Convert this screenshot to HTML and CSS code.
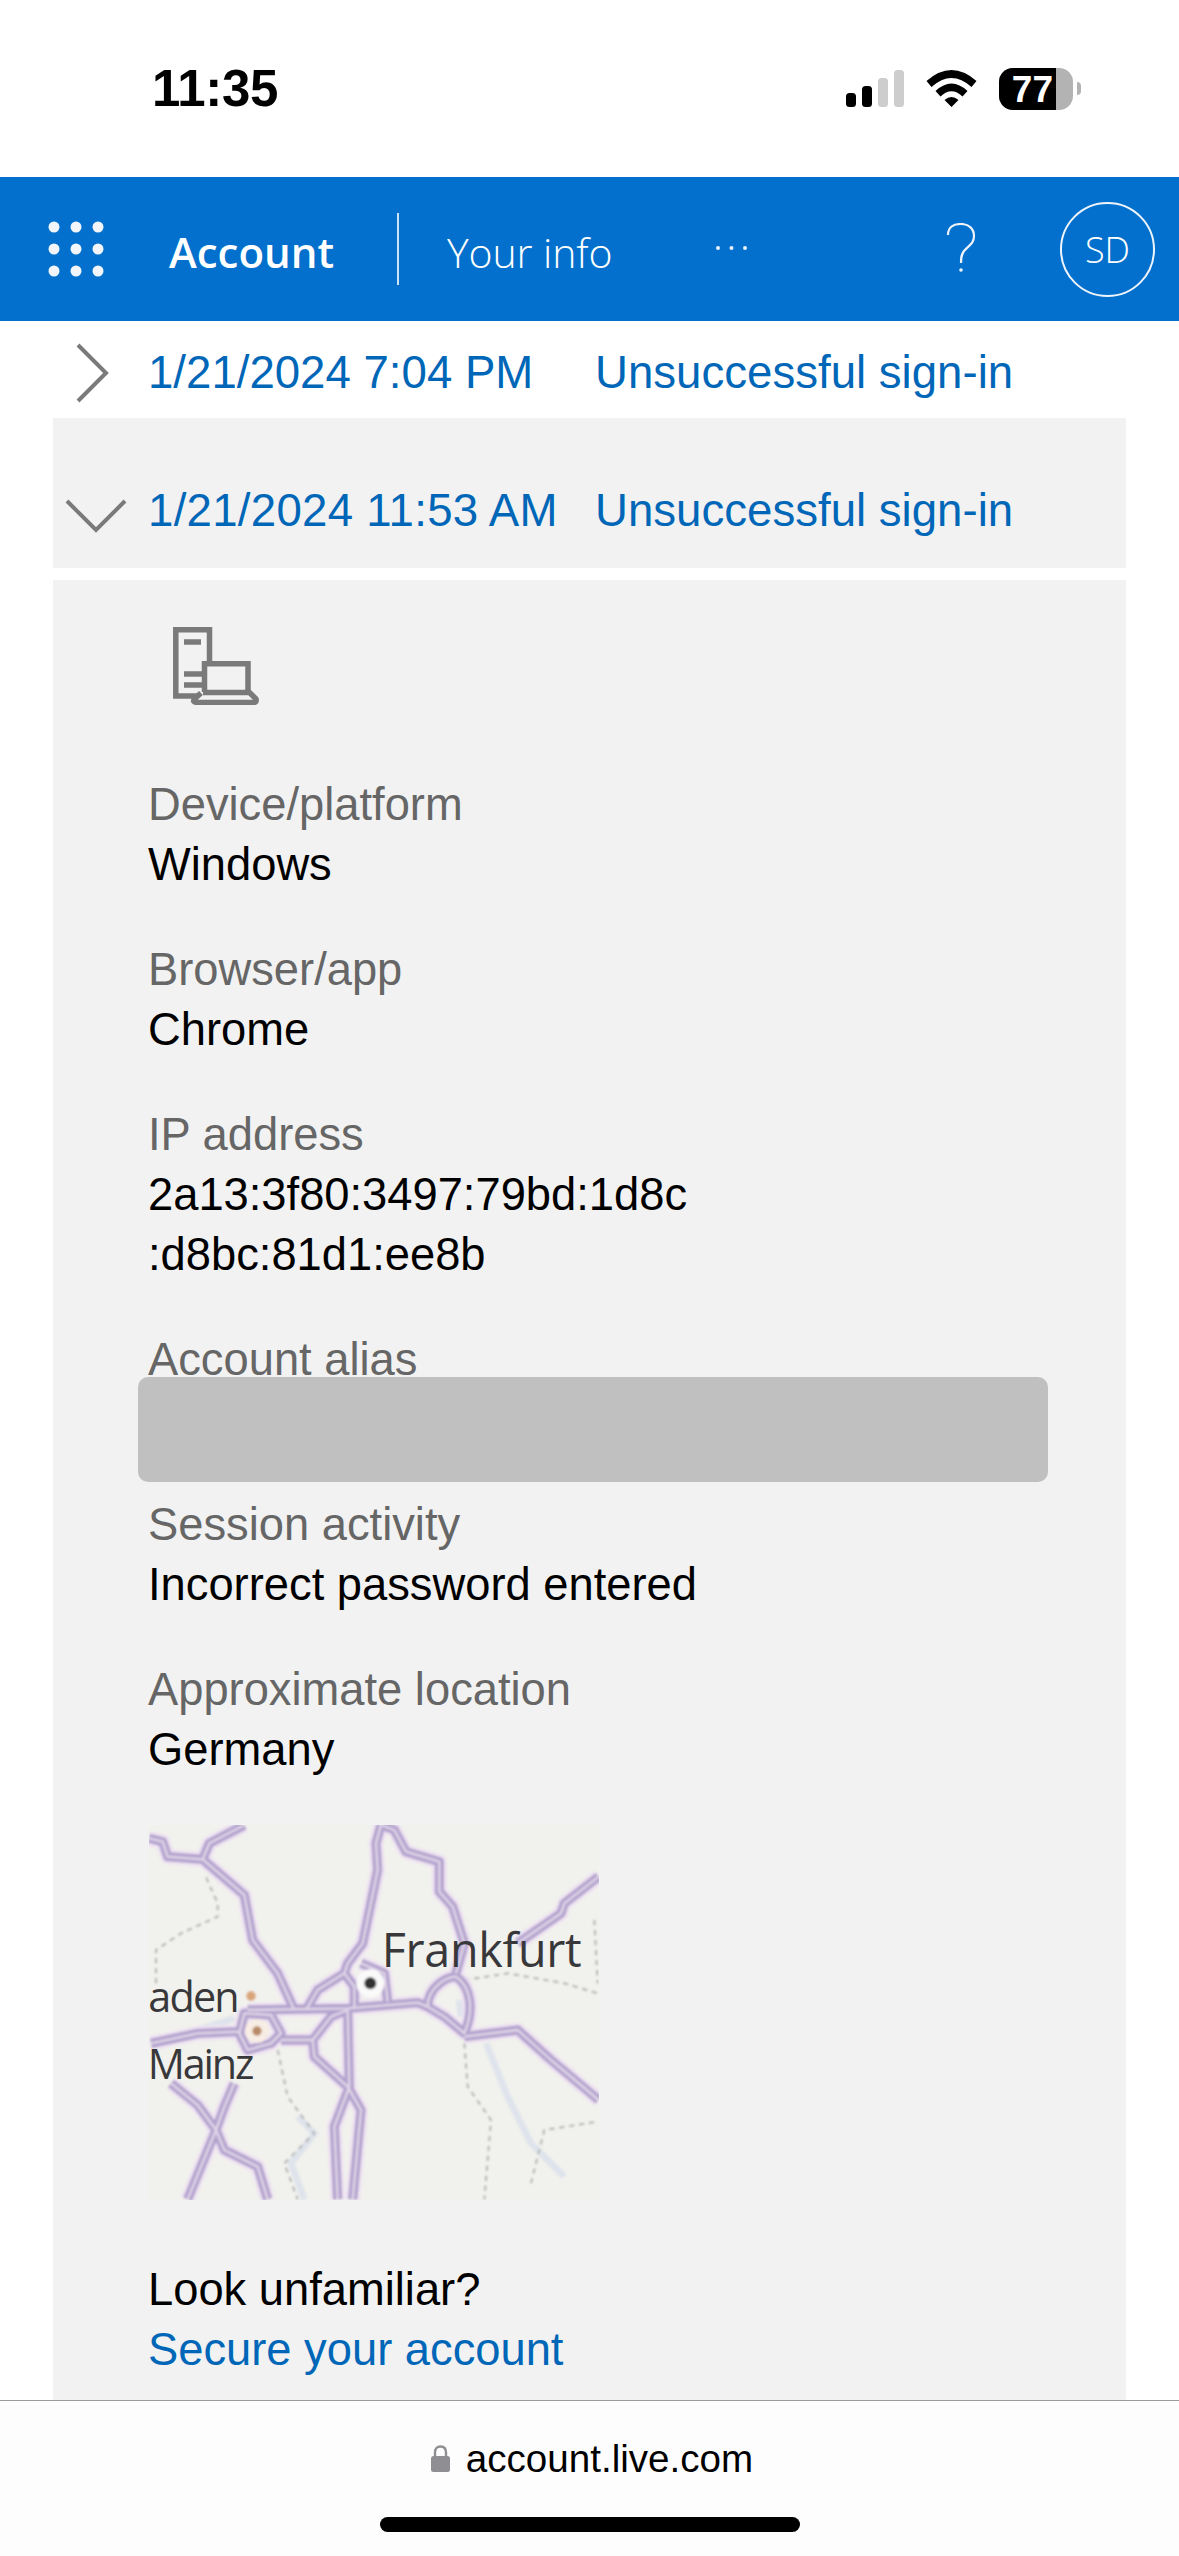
FILE: index.html
```html
<!DOCTYPE html>
<html lang="en">
<head>
<meta charset="utf-8">
<title>Account</title>
<link rel="stylesheet" href="styles.css">
</head>
<body>
<div class="page">
  <div class="status">
    <div class="time">11:35</div>
    <div class="status-icons">
      <div class="signal"><i class="bar b1"></i><i class="bar b2"></i><i class="bar b3 off"></i><i class="bar b4 off"></i></div>
      <svg class="wifi" viewBox="0 0 50 37"><path d="M0 11Q25 -11 50 11L45 17Q25 -1 5 17Z"/><path d="M9 21Q25 6 41 21L36 26.5Q25 16 14 26.5Z"/><path d="M18 30Q25 24 32 30L25 37Z"/></svg>
      <div class="battery"><div class="batt-body"><span class="batt-fill">77</span></div><i class="batt-tip"></i></div>
    </div>
  </div>

  <header class="topbar">
    <svg class="waffle" viewBox="0 0 56 56"><g fill="#f2f6fb"><circle cx="6" cy="6" r="5.5"/><circle cx="28" cy="6" r="5.5"/><circle cx="50" cy="6" r="5.5"/><circle cx="6" cy="28" r="5.5"/><circle cx="28" cy="28" r="5.5"/><circle cx="50" cy="28" r="5.5"/><circle cx="6" cy="50" r="5.5"/><circle cx="28" cy="50" r="5.5"/><circle cx="50" cy="50" r="5.5"/></g></svg>
    <div class="brand">Account</div>
    <div class="divider"></div>
    <div class="nav-item">Your info</div>
    <svg class="more" viewBox="0 0 33 6"><g fill="#e8f0f8"><circle cx="3" cy="3" r="2"/><circle cx="16.500" cy="3" r="2"/><circle cx="30" cy="3" r="2"/></g></svg>
    <svg class="help" viewBox="0 0 32 50"><path d="M3 12C3 4 9 1 16 1C24 1 29 6 29 13C29 21 23 23 19 28C16 32 16 35 16 40" fill="none" stroke="#eef4fa" stroke-width="2.200"/><circle cx="16" cy="47" r="1.800" fill="#eef4fa"/></svg>
    <div class="avatar">SD</div>
  </header>

  <main class="content">
    <div class="row">
      <svg class="chev" viewBox="0 0 96 60"><path d="M25 2L53 30L25 58" /></svg>
      <a class="date">1/21/2024 7:04 PM</a>
      <a class="result">Unsuccessful sign-in</a>
    </div>
    <div class="row row-open">
      <svg class="chev" viewBox="0 0 96 60"><path d="M14 20L43 49L72 20" /></svg>
      <a class="date date-wide">1/21/2024 11:53 AM</a>
      <a class="result">Unsuccessful sign-in</a>
    </div>

    <section class="panel">
      <svg class="device" viewBox="0 0 86 78">
        <g fill="none" stroke="#7a7a7a" stroke-width="5.500">
          <path d="M24 69H2.800V2.800H36.500V34"/>
          <path d="M11 15H28M11 47H30M11 58H30" />
          <path d="M31.500 65V36.800H75V65"/>
          <path d="M30 65.500H76.500L83 72Q84 75.500 80 75.500H24Q19 75 21.500 72L28 66"/>
        </g>
      </svg>

      <div class="field"><div class="label">Device/platform</div><div class="value">Windows</div></div>
      <div class="field"><div class="label">Browser/app</div><div class="value">Chrome</div></div>
      <div class="field"><div class="label">IP address</div><div class="value">2a13:3f80:3497:79bd:1d8c<br>:d8bc:81d1:ee8b</div></div>
      <div class="field"><div class="label">Account alias</div><div class="value value-hidden"><div class="redact"></div></div></div>
      <div class="field"><div class="label">Session activity</div><div class="value">Incorrect password entered</div></div>
      <div class="field"><div class="label">Approximate location</div><div class="value">Germany</div></div>

      <svg class="map" viewBox="54 45 1350 1125">
        <defs>
          <filter id="soft" x="-5%" y="-5%" width="110%" height="110%"><feGaussianBlur stdDeviation="3.500"/></filter>
          <path id="roads" d="M54 85L95 95L110 140L215 148L340 255L365 390L440 490L490 600M215 148L235 100L340 45M750 45L735 100L740 180L695 400L650 460L640 490L560 540L525 600M750 45L790 60L825 125L925 155L925 245L965 290L1000 400L975 490M350 600L650 595L860 578L890 590M1403 200L1300 280L1290 310L1160 400M1000 680L1160 660L1260 750L1403 870M60 700L200 670L325 665M450 690L545 690L600 620L650 600M545 690L550 740L650 830L690 900L665 1168M650 600L655 830L610 950L620 1168M640 490L670 530L670 595M120 820L200 885L255 960L280 1020L380 1070L410 1168M310 820L280 890L255 960L170 1168M340 610L420 615L450 670L420 700L350 720L325 670ZM890 590C890 530 950 500 975 500C1020 530 1030 600 1000 670L940 620ZM690 460L760 490L770 575"/>
        </defs>
        <rect x="54" y="45" width="1350" height="1125" fill="#f1f1ed"/>
        <g filter="url(#soft)">
          <g class="water">
            <path d="M60 705L200 660L310 625"/>
            <path d="M1065 700L1130 860L1200 1000L1300 1100"/>
            <path d="M500 920L550 970L480 1060L520 1168"/>
            <path d="M985 570L990 620"/>
          </g>
          <g class="borders">
            <path d="M75 520L75 420L150 370L260 320L260 280L220 190"/>
            <path d="M440 720L470 860L550 970L460 1060L500 1168"/>
            <path d="M1000 700L1010 830L1080 930L1060 1168"/>
            <path d="M1200 1120L1240 960L1400 935"/>
            <path d="M1000 510L1130 490L1300 520L1400 550"/>
            <path d="M1390 330L1400 520"/>
          </g>
          <use href="#roads" class="halo"/>
          <use href="#roads" class="road"/>
          <use href="#roads" class="road-in"/>
          <circle cx="718" cy="520" r="42" fill="#fafafa"/>
          <circle cx="378" cy="663" r="36" fill="#f7ede4"/>
          <circle cx="718" cy="520" r="18" fill="#333"/>
          <circle cx="360" cy="558" r="14" fill="#d9a57c"/>
          <circle cx="378" cy="663" r="14" fill="#b98a68"/>
        </g>
        <g class="map-text">
          <text x="752" y="472" textLength="600">Frankfurt</text>
          <text x="52" y="607" textLength="274" class="small">aden</text>
          <text x="50" y="808" textLength="320" class="small">Mainz</text>
        </g>
      </svg>

      <div class="unfamiliar">Look unfamiliar?</div>
      <a class="secure">Secure your account</a>
    </section>
  </main>

  <footer class="addressbar">
    <div class="url">
      <svg class="lock" viewBox="0 0 19 27"><path d="M4 13V7.500C4 3.500 6 1.500 9.500 1.500C13 1.500 15 3.500 15 7.500V13" fill="none" stroke="#8e8e93" stroke-width="2.400"/><rect x="0" y="11" width="19" height="16" rx="2.500" fill="#8e8e93"/></svg>
      <span class="host">account.live.com</span>
    </div>
    <div class="home"></div>
  </footer>
</div>
</body>
</html>
```

FILE: styles.css
```css
* { box-sizing: border-box; }
html, body { margin: 0; padding: 0; background: #fff; }
body { font-family: "Liberation Sans", Arial, sans-serif; color: #000; }
.page { width: 1179px; height: 2556px; display: flex; flex-direction: column; overflow: hidden; }

/* status bar */
.status { height: 177px; flex: none; display: flex; align-items: center; justify-content: space-between; padding: 0 98px 0 152px; }
.time { font-size: 51px; font-weight: 700; line-height: 1; letter-spacing: -0.3px; }
.status-icons { display: flex; align-items: center; gap: 22px; }
.signal { display: flex; align-items: flex-end; gap: 6px; height: 37px; }
.bar { display: block; width: 10px; background: #000; border-radius: 3.5px; }
.bar.off { background: #cdcdcd; }
.b1 { height: 14px; } .b2 { height: 21px; } .b3 { height: 29px; } .b4 { height: 37px; }
.wifi { width: 51px; height: 37px; display: block; fill: #000; }
.battery { display: flex; align-items: center; }
.batt-body { width: 74px; height: 42px; border-radius: 14px; background: #b3b3b3; overflow: hidden; }
.batt-fill { display: block; width: 57px; height: 42px; background: #000; color: #fff; font-size: 37px; font-weight: 700; line-height: 43px; text-align: right; padding-right: 3px; }
.batt-tip { display: block; width: 4px; height: 13px; background: #b3b3b3; border-radius: 0 6px 6px 0; margin-left: 4px; }

/* header */
.topbar { height: 144px; flex: none; background: #0270cc; color: #fff; display: flex; align-items: center; font-family: "Open Sans", sans-serif; }
.waffle { width: 56px; height: 56px; margin-left: 48px; flex: none; }
.brand { margin-left: 64px; width: 229px; padding: 5px 0 0 1px; font-size: 42px; font-weight: 600; line-height: 60px; }
.divider { width: 2px; height: 72px; background: rgba(255,255,255,.8); flex: none; }
.nav-item { margin-left: 48px; width: 268px; padding-top: 5px; font-size: 41px; font-weight: 300; line-height: 60px; letter-spacing: -0.1px; }
.more { width: 33px; height: 6px; flex: none; margin-top: -3px; }
.help { width: 32px; height: 50px; flex: none; margin-left: 197px; margin-top: -2px; }
.avatar { width: 95px; height: 95px; margin-left: 83px; border: 2px solid #f0f5fb; border-radius: 50%; display: flex; align-items: center; justify-content: center; font-size: 36px; font-weight: 300; flex: none; }

/* list */
.content { flex: 1; min-height: 0; overflow: hidden; display: flex; flex-direction: column; }
.row { flex: none; height: 97px; padding: 22px 53px 0; display: flex; font-size: 45.6px; line-height: 60px; color: #0067b8; }
.row-open { height: 150px; padding-top: 63px; margin: 0 53px; padding-left: 0; padding-right: 0; background: #f2f2f2; }
.chev { width: 96px; height: 60px; flex: none; margin-right: -1px; fill: none; stroke: #7a7a7a; stroke-width: 4; }
.date { width: 447px; flex: none; }
.date-wide { letter-spacing: 0.28px; }
.result { flex: none; }

/* detail panel */
.panel { flex: 1; margin: 12px 53px 0; padding: 47px 95px 0; background: #f2f2f2; font-size: 45.3px; line-height: 60px; overflow: hidden; }
.device { display: block; width: 86px; height: 78px; margin: 0 0 70px 25px; }
.field { margin-bottom: 45px; }
.label { color: #666; }
.value { color: #000; }
.value-hidden { position: relative; height: 60px; }
.redact { position: absolute; left: -10px; top: -13px; width: 910px; height: 105px; background: #c0c0c0; border-radius: 10px; }
.map { display: block; width: 450px; height: 375px; margin-left: 1px; }
.water { fill: none; stroke: #dfe4ec; stroke-width: 20; }
.borders { fill: none; stroke: #b5b5b5; stroke-width: 6; stroke-dasharray: 16 14; }
.halo { fill: none; stroke: #eee2f2; stroke-width: 44; stroke-linejoin: round; }
.road { fill: none; stroke: #b4a3ce; stroke-width: 28; stroke-linejoin: round; }
.road-in { fill: none; stroke: #e0d6e8; stroke-width: 7; stroke-linejoin: round; }
.map-text text { font-family: "Open Sans", sans-serif; font-size: 140px; font-weight: 500; fill: #38383b; }
.map-text text.small { font-size: 124px; }
.unfamiliar { margin-top: 60px; color: #000; }
.secure { display: block; color: #0067b8; }

/* address bar */
.addressbar { height: 156px; flex: none; background: #fdfdfd; border-top: 1px solid #9a9a9a; display: flex; flex-direction: column; align-items: center; }
.url { display: flex; align-items: center; gap: 16px; height: 27px; margin: 44px 0 0 5px; }
.lock { width: 19px; height: 27px; display: block; }
.host { font-size: 38.6px; line-height: 40px; color: #000; }
.home { width: 420px; height: 15px; margin-top: 45px; background: #000; border-radius: 8px; }
```
